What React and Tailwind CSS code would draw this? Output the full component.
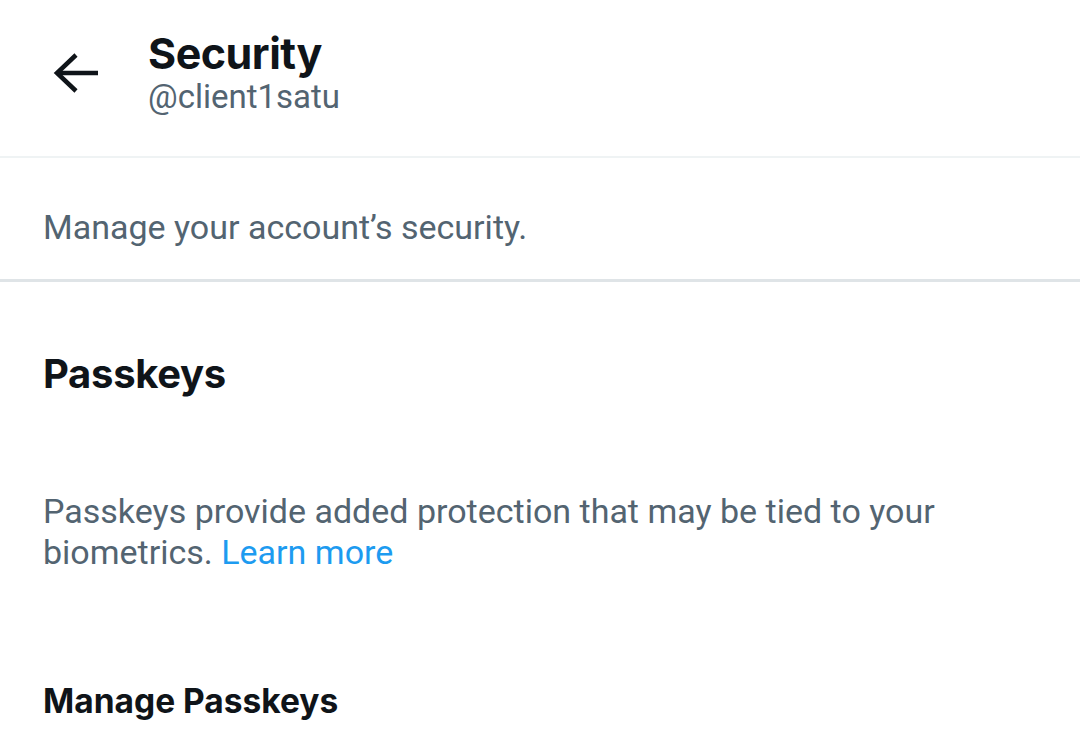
import React from 'react';

const ArrowLeft = () => (
  <svg viewBox="0 0 46 40" className="w-[46px] h-[40px] text-[#0f1419]" fill="none" stroke="currentColor" strokeWidth="4.5">
    <path d="M45 20H4" />
    <path d="M23 2L4 20l19 18" />
  </svg>
);

export default function App() {
  return (
    <div className="w-[1080px] h-[751px] overflow-hidden bg-white font-['Inter',sans-serif]">
      <div className="flex items-center h-[158px] border-b-2 border-[#eff3f4]">
        <div className="w-[148px] flex pl-[53px] -mt-[10px]">
          <ArrowLeft />
        </div>
        <div className="flex flex-col -mt-[12px]">
          <h1 className="text-[43px] leading-[50px] font-bold text-[#0f1419] tracking-[-0.5px]">Security</h1>
          <p className="text-[33px] leading-[38px] text-[#536471] font-['Roboto',sans-serif]">@client1satu</p>
        </div>
      </div>

      <div className="h-[124px] flex items-center px-[43px] border-b-[3px] border-[#dfe4e7]">
        <p className="text-[34px] text-[#536471] font-['Roboto',sans-serif] mt-[18px]">
          Manage your account’s security.
        </p>
      </div>

      <div className="px-[43px]">
        <h2 className="pt-[68px] text-[40px] leading-[48px] font-bold text-[#0f1419] tracking-[-0.3px]">Passkeys</h2>
        <p className="mt-[93px] text-[34px] leading-[41px] text-[#536471] font-['Roboto',sans-serif]">
          Passkeys provide added protection that may be tied to your
          <br />
          biometrics. <span className="text-[#1d9bf0]">Learn more</span>
        </p>
        <h3 className="mt-[108px] text-[33.5px] leading-[40px] font-bold text-[#0f1419]">Manage Passkeys</h3>
      </div>
    </div>
  );
}
